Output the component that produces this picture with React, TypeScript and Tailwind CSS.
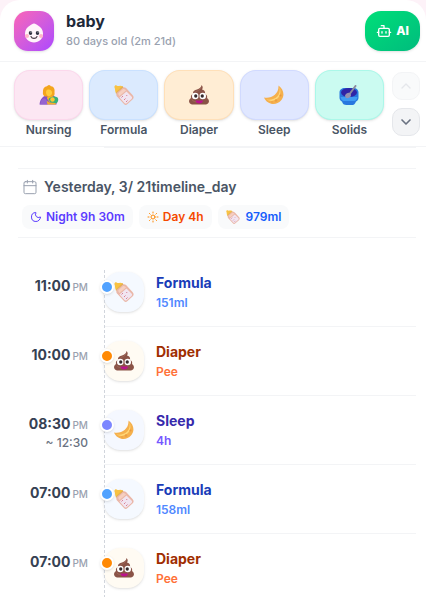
import React from 'react';
import { Bot, Calendar, ChevronDown, ChevronUp, Moon, Sun } from 'lucide-react';

interface IconProps {
  className?: string;
}

const NursingIcon: React.FC<IconProps> = ({ className }) => (
  <svg viewBox="0 0 40 40" className={className} aria-hidden="true">
    <path d="M1 39C2 28 8 21 18 20h9c7 3 9 10 8 19z" fill="#8552c4" />
    <path d="M18 19h9l2 11-7 5-6-8z" fill="#f5b32a" />
    <circle cx="20" cy="3.500" r="3.500" fill="#f0a51e" />
    <path d="M8 14C7 5 14 1 21 2c9 0 11 6 10 12 1 6-1 9-5 9H14c-5 0-7-5-6-9z" fill="#f3a51d" />
    <path d="M18 9c5 0 9 3 8 8-1 4-4 5-7 5s-5-4-5-8c0-3 2-5 4-5z" fill="#ffcc3b" />
    <path d="M19 28c4-5 13-7 18-3 3 4 1 11-4 12l-10-2z" fill="#35b07a" />
    <circle cx="27" cy="29" r="4.500" fill="#f9c832" />
    <path d="M15 31l6 4 12 1 1 3H15z" fill="#f3b225" />
    <path d="M5 30c3-4 8-4 10 0l2 9H2z" fill="#9664d0" />
  </svg>
);

const BottleIcon: React.FC<IconProps> = ({ className }) => (
  <svg viewBox="0 0 40 40" className={className} aria-hidden="true">
    <path d="M1 5c-1-4 3-6 6-3 3 0 7-2 10 1L4 16C1 12 3 8 1 5z" fill="#f8c243" />
    <path d="M17 2l2 3L6 18l-3-2z" fill="#e5ad45" />
    <path d="M18 5c4-1 6 1 8 3l11 12c3 3 3 6 0 9L27 38c-3 3-6 2-8-1L7 24c-2-2-3-4-2-8z" fill="#eab7a8" />
    <path d="M18 8c3 0 4 1 6 3L11 22c-2-2-3-4-2-6z" fill="#f6cfc0" />
    <path d="M25 13l10 10c2 2 1 4 0 5l-9 8c-2 2-4 1-5 0L11 25z" fill="#f1e5f1" />
    <path d="M15 25l3-3M20 30l3-3M24 34l3-3M25 20l1 2" stroke="#d98296" strokeWidth="2" />
  </svg>
);

const PoopIcon: React.FC<IconProps> = ({ className }) => (
  <svg viewBox="0 0 40 40" className={className} aria-hidden="true">
    <path d="M25 0c3 3 3 6 1 9 5 1 7 5 6 9 4 2 5 5 4 8 6 4 5 12-2 13H6c-7-1-8-9-2-13-1-4 1-7 4-8-1-5 3-8 8-9 5-2 9-4 9-9z" fill="#8a5347" />
    <path d="M24 6c-2 4-6 5-10 7M6 30c3 3 7 4 11 4" fill="none" stroke="#9f6656" strokeWidth="2" strokeLinecap="round" />
    <circle cx="12.500" cy="22" r="6.500" fill="#fff" />
    <circle cx="27.500" cy="22" r="6.500" fill="#fff" />
    <circle cx="13.500" cy="22" r="3.300" fill="#35292b" />
    <circle cx="26.500" cy="22" r="3.300" fill="#35292b" />
    <path d="M13 31h15c0 8-15 8-15 0z" fill="#bc128e" />
  </svg>
);

const CrescentIcon: React.FC<IconProps> = ({ className }) => (
  <svg viewBox="0 0 40 40" className={className} aria-hidden="true">
    <path d="M29 1c11 8 13 21 5 30-9 11-28 9-34-6 14 3 30-6 29-24z" fill="#f5b04d" />
    <path d="M31 4c3 17-8 27-26 25 15 9 34-5 26-25z" fill="#ffd778" />
    <circle cx="33" cy="21" r="2" fill="#e9973e" />
    <circle cx="24" cy="31" r="2.500" fill="#eb9e42" />
    <circle cx="16" cy="34" r="1.500" fill="#eb9e42" />
  </svg>
);

const BowlIcon: React.FC<IconProps> = ({ className }) => (
  <svg viewBox="0 0 40 40" className={className} aria-hidden="true">
    <path d="M1 15c0-6 5-9 10-9h18c6 0 10 4 10 9v10c0 4-2 7-5 8-2 6-5 7-9 7H15c-5 0-8-2-9-7-3-1-5-4-5-8z" fill="#2878df" />
    <path d="M3 24h34c-1 5-3 7-6 8H9c-3-1-5-3-6-8z" fill="#409cf4" />
    <ellipse cx="20" cy="15" rx="16" ry="9" fill="#3024a6" />
    <path d="M19 21L33 2" stroke="#8c8b9e" strokeWidth="4" strokeLinecap="round" />
    <ellipse cx="18" cy="21" rx="6" ry="5" fill="#9692b0" transform="rotate(-35 18 21)" />
  </svg>
);

const BabyFace: React.FC<IconProps> = ({ className }) => (
  <svg viewBox="0 0 40 40" className={className} aria-hidden="true">
    <path d="M20 1c3 0 5 2 8 4 6 3 10 9 10 16 0 11-8 18-18 18S2 32 2 21C2 14 6 8 12 5c3-2 5-4 8-4z" fill="#fff5fa" />
    <circle cx="6" cy="26" r="4" fill="#ffb5c8" />
    <circle cx="34" cy="26" r="4" fill="#ffb5c8" />
    <ellipse cx="13" cy="20" rx="3.500" ry="4" fill="#303040" />
    <ellipse cx="27" cy="20" rx="3.500" ry="4" fill="#303040" />
    <circle cx="14" cy="18" r="1.200" fill="#fff" />
    <circle cx="28" cy="18" r="1.200" fill="#fff" />
    <path d="M14 27c2 5 10 5 12 0" fill="none" stroke="#493945" strokeWidth="2.200" strokeLinecap="round" />
  </svg>
);

const ACTIONS = [
  { id: 'nursing', label: 'Nursing', Icon: NursingIcon, box: 'bg-pink-100 border-pink-200/60' },
  { id: 'formula', label: 'Formula', Icon: BottleIcon, box: 'bg-blue-100 border-blue-200/60' },
  { id: 'diaper', label: 'Diaper', Icon: PoopIcon, box: 'bg-orange-100 border-orange-200/60' },
  { id: 'sleep', label: 'Sleep', Icon: CrescentIcon, box: 'bg-indigo-100 border-indigo-200/60' },
  { id: 'solids', label: 'Solids', Icon: BowlIcon, box: 'bg-teal-100 border-teal-200/60' },
];

const KINDS = {
  formula: { label: 'Formula', Icon: BottleIcon, box: 'bg-[#f5f9ff]', dot: 'bg-[#51a2ff]', title: 'text-blue-800', detail: 'text-[#5088ff]' },
  diaper: { label: 'Diaper', Icon: PoopIcon, box: 'bg-[#fffbf3]', dot: 'bg-[#ff8904]', title: 'text-orange-800', detail: 'text-[#ff7138]' },
  sleep: { label: 'Sleep', Icon: CrescentIcon, box: 'bg-[#f5f8ff]', dot: 'bg-[#7c86ff]', title: 'text-indigo-800', detail: 'text-[#7558ff]' },
};

interface Entry {
  kind: keyof typeof KINDS;
  time: string;
  until?: string;
  detail: string;
}

const ENTRIES: Entry[] = [
  { kind: 'formula', time: '11:00', detail: '151ml' },
  { kind: 'diaper', time: '10:00', detail: 'Pee' },
  { kind: 'sleep', time: '08:30', until: '~ 12:30', detail: '4h' },
  { kind: 'formula', time: '07:00', detail: '158ml' },
  { kind: 'diaper', time: '07:00', detail: 'Pee' },
];

const Header = () => (
  <header className="flex items-center justify-between border-b border-gray-100 pt-[11px] pb-2.5 pl-3.5 pr-1.5">
    <div className="flex items-center gap-3">
      <div className="flex size-10 items-center justify-center rounded-[14px] bg-linear-to-br from-[#fb64b6] to-[#ad46ff] shadow-sm">
        <BabyFace className="mt-1 size-5" />
      </div>
      <div>
        <h1 className="text-base font-bold leading-5 text-gray-800">baby</h1>
        <p className="text-[11px] font-medium leading-5 text-gray-400">80 days old (2m 21d)</p>
      </div>
    </div>
    <button className="flex h-10 items-center gap-1 rounded-2xl bg-linear-to-br from-[#00df78] to-[#00bc7d] px-[11px] text-xs font-extrabold text-white shadow-sm">
      <Bot size={16} />
      AI
    </button>
  </header>
);

const QuickActions = () => (
  <section className="flex items-start gap-2 border-b border-gray-100 pt-2 pb-1.5 pl-3.5 pr-1.5">
    <div className="grid flex-1 grid-cols-5 gap-1.5">
      {ACTIONS.map(({ id, label, Icon, box }) => (
        <button key={id} className="flex flex-col items-center text-xs font-semibold leading-5 text-gray-600">
          <span className={`flex h-[50px] w-full items-center justify-center rounded-2xl border shadow-sm ${box}`}>
            <Icon className="size-5" />
          </span>
          {label}
        </button>
      ))}
    </div>
    <div className="flex flex-col gap-2 pt-0.5">
      <button aria-label="Previous actions" disabled className="flex size-7 items-center justify-center rounded-[10px] border border-gray-100 bg-gray-50 text-gray-200">
        <ChevronUp size={16} />
      </button>
      <button aria-label="More actions" className="flex size-7 items-center justify-center rounded-[10px] border border-gray-200 bg-gray-100 text-gray-500">
        <ChevronDown size={16} strokeWidth={2.5} />
      </button>
    </div>
  </section>
);

const DaySummary = () => (
  <section className="ml-[18px] mr-2.5 mt-5 border-y border-gray-100 pt-2 pb-2 pl-1">
    <h2 className="flex items-center gap-1.5 text-sm font-semibold leading-5 text-gray-600">
      <Calendar size={16} strokeWidth={1.5} className="text-gray-400" />
      Yesterday, 3/ 21timeline_day
    </h2>
    <div className="mt-2 flex gap-1.5 text-xs font-semibold leading-6">
      <span className="flex items-center gap-1 rounded-lg bg-gray-50 px-2 text-[#5b3cff]">
        <Moon size={12} />
        Night 9h 30m
      </span>
      <span className="flex items-center gap-1 rounded-lg bg-gray-50 px-2 text-[#f54900]">
        <Sun size={12} className="text-orange-400" />
        Day 4h
      </span>
      <span className="flex items-center gap-1.5 rounded-lg bg-gray-50 px-2 text-blue-600">
        <BottleIcon className="size-3.5" />
        979ml
      </span>
    </div>
  </section>
);

const TimelineRow: React.FC<{ entry: Entry }> = ({ entry }) => {
  const { label, Icon, box, dot, title, detail } = KINDS[entry.kind];
  return (
    <li className="flex h-[69px]">
      <div className="w-[104px] shrink-0 pt-[18px] pr-4 text-right">
        <p className="text-sm font-bold leading-5 text-gray-700">
          {entry.time}
          <span className="ml-0.5 text-[10px] font-medium text-gray-400">PM</span>
        </p>
        {entry.until && <p className="text-xs font-medium leading-4 text-gray-500">{entry.until}</p>}
      </div>
      <div className="relative mr-2.5 flex flex-1 items-start gap-3 border-b border-gray-100 pt-[14px]">
        <div className={`flex size-10 shrink-0 items-center justify-center rounded-2xl shadow-sm ${box}`}>
          <Icon className="size-5" />
        </div>
        <span className={`absolute -left-1 top-[22px] z-10 size-3.5 rounded-full border-2 border-white shadow-sm ${dot}`} />
        <div className="pt-px">
          <h3 className={`text-sm font-bold leading-5 ${title}`}>{label}</h3>
          <p className={`text-xs font-semibold leading-5 ${detail}`}>{entry.detail}</p>
        </div>
      </div>
    </li>
  );
};

const Timeline = () => (
  <section className="relative pt-5">
    <ul>
      {ENTRIES.map((entry, i) => (
        <TimelineRow key={i} entry={entry} />
      ))}
    </ul>
    <div className="absolute bottom-0 left-[104px] top-8 border-l border-dashed border-gray-300" />
  </section>
);

export default function App() {
  return (
    <div className="h-screen overflow-hidden bg-pink-50 font-['Inter',sans-serif]">
      <main className="min-h-full rounded-t-[20px] bg-white">
        <Header />
        <QuickActions />
        {/* bottom edge of the row scrolled under the toolbar */}
        <div className="ml-[104px] mr-2.5 border-b border-gray-100" />
        <DaySummary />
        <Timeline />
      </main>
    </div>
  );
}
